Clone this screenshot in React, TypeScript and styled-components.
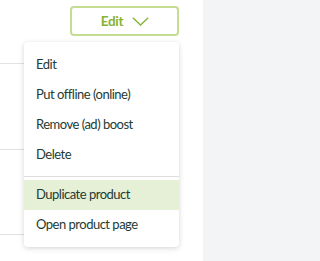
import React from "react";
import styled, { createGlobalStyle } from "styled-components";

const Global = createGlobalStyle`
  html, body { margin: 0; padding: 0; background: #f3f4f6; }
  body { font-family: "Lato", "Liberation Sans", sans-serif; }
  * { box-sizing: border-box; }
`;

const Page = styled.div`
  display: flex;
  width: 100%;
  height: 100vh;
  overflow: hidden;
`;

const Main = styled.div`
  position: relative;
  width: 203px;
  flex: none;
  background: #ffffff;
`;

const Sidebar = styled.div`
  flex: 1;
  background: #f3f4f6;
`;

const Toolbar = styled.div`
  display: flex;
  padding: 6px 0 0 70px;
`;

const Anchor = styled.div`
  position: relative;
`;

const EditButton = styled.button`
  display: flex;
  align-items: center;
  justify-content: center;
  gap: 9px;
  width: 109px;
  height: 30px;
  padding: 0 0 0 1px;
  border: 2px solid #c5dd90;
  border-radius: 4px;
  background: #ffffff;
  color: #86b236;
  font-family: "Lato", "Liberation Sans", sans-serif;
  font-weight: 700;
  font-size: 13.5px;
  letter-spacing: -0.3px;
  cursor: pointer;
`;

const Rows = styled.div`
  display: flex;
  flex-direction: column;
  margin-top: 27px;
  width: 170px;
`;

const Row = styled.div<{ $h: number }>`
  height: ${(p) => p.$h}px;
  border-top: 1px solid #e2e2e2;
`;

const Menu = styled.ul`
  position: absolute;
  top: calc(100% + 6px);
  right: 0;
  width: 155px;
  margin: 0;
  padding: 8px 0 7px;
  list-style: none;
  background: #ffffff;
  border-radius: 4px;
  box-shadow: 0 1px 4px rgba(0, 0, 0, 0.12), 0 2px 8px rgba(0, 0, 0, 0.06);
  z-index: 2;
`;

const Item = styled.li<{ $active?: boolean }>`
  height: 30px;
  line-height: 29px;
  padding: 0 12px;
  font-size: 13px;
  letter-spacing: -0.5px;
  color: #233b33;
  white-space: nowrap;
  background: ${(p) => (p.$active ? "#e6f0d7" : "transparent")};
`;

const Divider = styled.li`
  height: 1px;
  margin: 6px 0 3px;
  background: #dedede;
`;

const Chevron = () => (
  <svg width="17" height="9" viewBox="0 0 17 9" fill="none">
    <path d="M0.8 0.8 L8.5 8 L16.2 0.8" stroke="#86b236" strokeWidth="1.3" />
  </svg>
);

export default function App() {
  return (
    <>
      <Global />
      <Page>
        <Main>
          <Toolbar>
            <Anchor>
              <EditButton>
                Edit
                <Chevron />
              </EditButton>
              <Menu>
                <Item>Edit</Item>
                <Item>Put offline (online)</Item>
                <Item>Remove (ad) boost</Item>
                <Item>Delete</Item>
                <Divider />
                <Item $active>Duplicate product</Item>
                <Item>Open product page</Item>
              </Menu>
            </Anchor>
          </Toolbar>
          <Rows>
            <Row $h={86} />
            <Row $h={85} />
            <Row $h={40} />
          </Rows>
        </Main>
        <Sidebar />
      </Page>
    </>
  );
}
